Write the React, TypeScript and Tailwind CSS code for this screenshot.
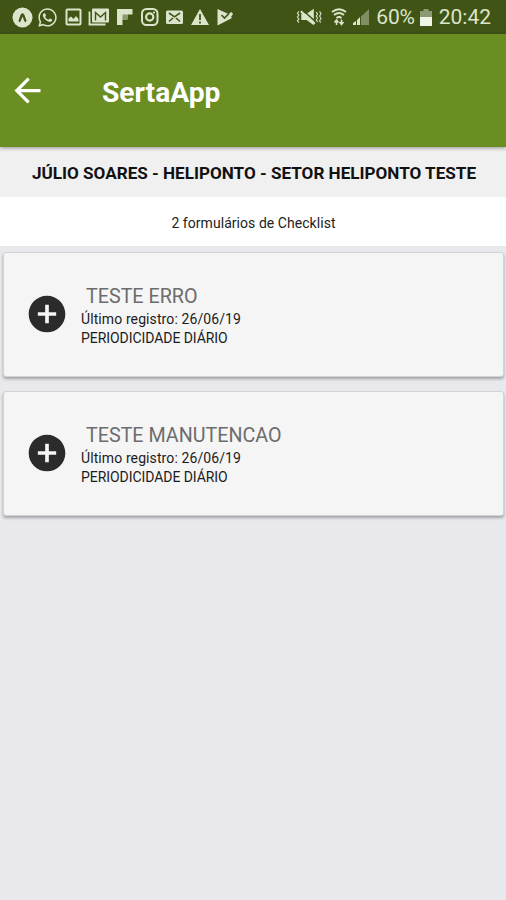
import React from "react";
import { FaWhatsapp } from "react-icons/fa";
import { MdArrowBack, MdAddCircle } from "react-icons/md";

const forms = [
  { name: "TESTE ERRO", date: "26/06/19", period: "DIÁRIO" },
  { name: "TESTE MANUTENCAO", date: "26/06/19", period: "DIÁRIO" },
];

export default function App() {
  return (
    <div className="w-full h-screen flex flex-col bg-[#e9e8ed] overflow-hidden font-['Roboto',sans-serif]">
      <StatusBar />
      <header className="relative z-10 h-[113px] shrink-0 bg-[#6b8e23] flex items-center pl-[8px] shadow-[0_1px_4px_rgba(0,0,0,0.4)]">
        <MdArrowBack className="size-[39px] text-white" />
        <h1 className="ml-[55px] mt-[4px] text-white text-[28.2px] leading-8 font-bold whitespace-nowrap">
          SertaApp
        </h1>
      </header>
      <div className="h-[50px] shrink-0 bg-[#f0f0f0] flex items-center justify-center pt-[4px] pl-[2px] text-[17.1px] font-bold text-[#111] whitespace-nowrap">
        JÚLIO SOARES - HELIPONTO - SETOR HELIPONTO TESTE
      </div>
      <div className="h-[49px] shrink-0 bg-white flex items-center justify-center pt-[3px] pl-px text-[14px] tracking-[0.05px] text-[#222] whitespace-nowrap">
        2 formulários de Checklist
      </div>
      <main className="flex flex-col gap-[14px] pt-[6px] pl-[3px] pr-[2px]">
        {forms.map((form) => (
          <FormCard key={form.name} {...form} />
        ))}
      </main>
    </div>
  );
}

function FormCard({ name, date, period }: { name: string; date: string; period: string }) {
  return (
    <div className="h-[125px] flex items-center pl-[21px] rounded-[3px] bg-[#f5f5f5] border border-[#d3d3d7] shadow-[0_2px_3px_rgba(0,0,0,0.3)]">
      <MdAddCircle className="size-[44px] mb-px text-[#2b2b2b] shrink-0" />
      <div className="ml-[12px] pt-px text-[14px] leading-[19px] text-[#1c1c1c] whitespace-nowrap">
        <div className="pl-[5px] text-[19.7px] leading-[27px] text-[#6c6c6c]">{name}</div>
        <div className="tracking-[0.1px]">Último registro: {date}</div>
        <div className="tracking-[-0.06px]">PERIODICIDADE {period}</div>
      </div>
    </div>
  );
}

function StatusBar() {
  return (
    <div className="h-[34px] shrink-0 bg-[#405515] text-[#dce4cb] flex items-center pl-[12px] pr-[15px]">
      <div className="flex items-center gap-[4.4px]">
        <Icon>
          <circle cx="10.5" cy="10.5" r="10" fill="currentColor" />
          <path d="M7 14.5c1.5-1 2.200-7 3.500-7s2 6 3.500 7" fill="none" stroke="#405515" strokeWidth="2.4" />
        </Icon>
        <FaWhatsapp className="size-[21px]" />
        <Icon>
          <rect x="3.5" y="2.5" width="14" height="15" rx="1" fill="none" stroke="currentColor" strokeWidth="2" />
          <path d="M5.5 14.5v-3l2.500-2 2.500 2.500 2.500-3 2.500 3v2.500z" fill="currentColor" />
        </Icon>
        <Icon>
          <path d="M1.500 4.500v13h16" fill="none" stroke="currentColor" strokeWidth="1.8" />
          <rect x="4" y="1.500" width="17" height="14" rx="1" fill="currentColor" />
          <path d="M7.500 13.500V5.500l5 4.500 5-4.500v8" fill="none" stroke="#405515" strokeWidth="1.4" />
        </Icon>
        <Icon>
          <path d="M3 2h15.500v5.500h-5v5H8.500v5.500H3z" fill="currentColor" />
          <path d="M8.500 7.500h5v5h-5z" fill="#8c9b6c" />
        </Icon>
        <Icon>
          <rect x="3" y="2" width="15.5" height="16" rx="4.5" fill="none" stroke="currentColor" strokeWidth="2" />
          <circle cx="10.7" cy="10" r="3.6" fill="none" stroke="currentColor" strokeWidth="2.2" />
          <circle cx="15" cy="5.5" r="1.1" fill="currentColor" />
        </Icon>
        <Icon>
          <rect x="2" y="3.5" width="17" height="13.5" rx="1.5" fill="currentColor" />
          <path d="M5 6l5.500 3.800L16 6M5 14.500l4-3.500M16 14.500l-4-3.500" fill="none" stroke="#405515" strokeWidth="1.6" />
        </Icon>
        <Icon>
          <path d="M10 2l9 16H1z" fill="currentColor" />
          <path d="M10 7v6M10 14.500v2" stroke="#405515" strokeWidth="1.8" />
        </Icon>
        <Icon>
          <path d="M2.500 2l11 5 3-2 1.500 2-2 3 1 1L2.500 18.500z" fill="currentColor" />
          <path d="M6.500 8l3 3L14 6.500" fill="none" stroke="#405515" strokeWidth="1.6" />
        </Icon>
      </div>
      <div className="ml-auto flex items-center">
        <svg viewBox="0 0 27 20" className="w-[26px] h-[20px]">
          <path d="M5.500 6.500h5.500l7.500-5v17l-7.500-5.500h-5.500z" fill="currentColor" />
          <path d="M7 3l13 11.500" stroke="#405515" strokeWidth="1.6" />
          <path d="M5 4l14.500 13" stroke="currentColor" strokeWidth="2.2" />
          <path d="M3 4L1.500 6 3 8l-1.500 2L3 12l-1.500 2L3 16M21 5l1.500 2L21 9l1.500 2-1.500 2 1.500 2M24.500 4L26 6.500 24.500 9l1.500 2.500-1.500 2.500 1 2" fill="none" stroke="currentColor" strokeWidth="1.1" />
        </svg>
        <svg viewBox="0 0 18 20" className="ml-[8px] w-[18px] h-[20px]">
          <path d="M2 5q7-5.500 14 0M4 8q5-4 10 0M6.500 11q2.500-2 5 0" fill="none" stroke="currentColor" strokeWidth="1.9" />
          <path d="M6.500 18v-5m-2 2.500l2-2.500 2 2.500M11.500 12.500v5m-2-2.500l2 2.500 2-2.500" fill="none" stroke="currentColor" strokeWidth="1.5" />
        </svg>
        <svg viewBox="0 0 18 18" className="ml-[4px] w-[18px] h-[18px]">
          <path d="M17 1v16H9V8.500z" fill="#7f8f62" />
          <path d="M8 9v8H5v-5zM4 13v4H1v-2z" fill="currentColor" />
        </svg>
        <span className="ml-[6px] text-[21px] leading-6 tracking-[-0.2px]">60%</span>
        <svg viewBox="0 0 12 17" className="ml-[5px] w-[12px] h-[17px]">
          <path d="M3.500 0h5v2H12v6H0V2h3.500z" fill="#8c9b72" />
          <path d="M0 8h12v9H0z" fill="#f1f5e8" />
        </svg>
        <span className="ml-[7px] text-[21px] leading-6">20:42</span>
      </div>
    </div>
  );
}

function Icon({ children }: { children: React.ReactNode }) {
  return (
    <svg viewBox="0 0 21 21" className="size-[21px]">
      {children}
    </svg>
  );
}
